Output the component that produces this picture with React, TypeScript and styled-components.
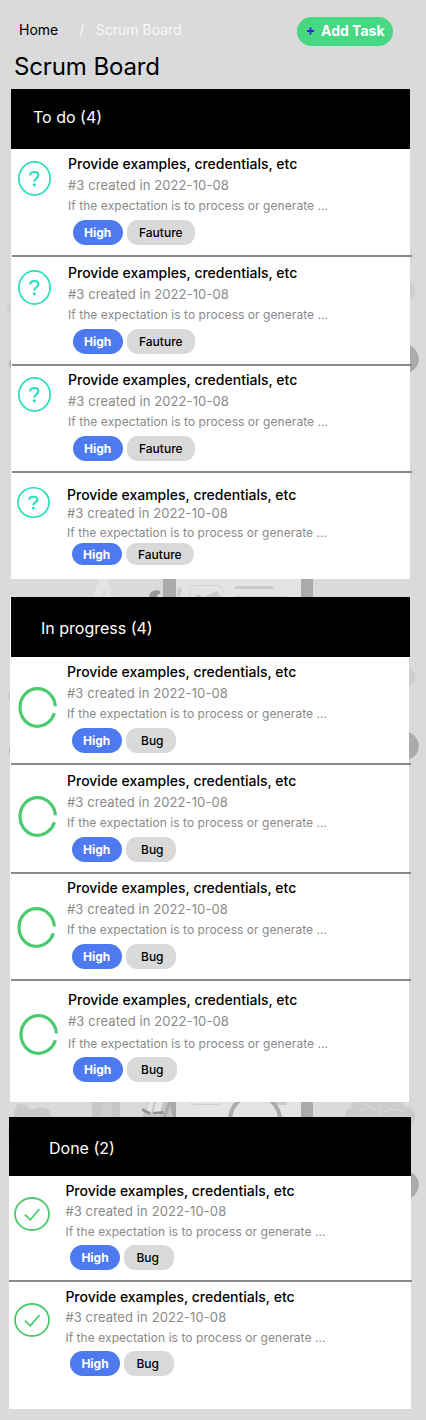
import React from "react";
import styled, { createGlobalStyle } from "styled-components";

const GlobalStyle = createGlobalStyle`
  * { box-sizing: border-box; }
  body { margin: 0; background: #dadada; font-family: Inter, "Liberation Sans", sans-serif; color: #000; }
`;

const Page = styled.main`
  position: relative;
  isolation: isolate;
  width: 426px;
  height: 1420px;
  background: #dadada;
  overflow: hidden;
`;

const Backdrop = styled.svg`
  position: absolute;
  inset: 0;
  z-index: -1;
`;

const TopBar = styled.header`
  display: flex;
  justify-content: space-between;
  align-items: flex-start;
  height: 50px;
  padding: 17px 33px 0 19px;
`;

const Breadcrumb = styled.nav`
  display: flex;
  padding-top: 4px;
  font-size: 14px;
  line-height: 18px;
`;

const Crumb = styled.span<{ $muted?: boolean; $gap?: number }>`
  margin-left: ${(p) => p.$gap ?? 0}px;
  color: ${(p) => (p.$muted ? "#f8f8f8" : "#000")};
  white-space: nowrap;
`;

const AddButton = styled.button`
  display: flex;
  align-items: center;
  gap: 7px;
  width: 96px;
  height: 29px;
  padding: 0 0 2px 10px;
  border: 0;
  border-radius: 15px;
  background: #47d881;
  color: #fff;
  font: 700 14px/18px Inter, sans-serif;
  white-space: nowrap;
`;

const Heading = styled.h1`
  height: 39px;
  margin: 0;
  padding-left: 14px;
  font-size: 24px;
  font-weight: 400;
  line-height: 33px;
  letter-spacing: -0.12px;
`;

const Panel = styled.section<{ $left: number; $width: number; $height: number; $after: number }>`
  display: flex;
  flex-direction: column;
  width: ${(p) => p.$width}px;
  height: ${(p) => p.$height}px;
  margin: 0 0 ${(p) => p.$after}px ${(p) => p.$left}px;
  background: #fff;
`;

const PanelHeader = styled.h2<{ $indent: number; $height: number; $shift: number; $top: number }>`
  flex: none;
  height: ${(p) => p.$height}px;
  width: 100%;
  margin: 0 0 0 ${(p) => p.$shift}px;
  padding: ${(p) => p.$top}px 0 0 ${(p) => p.$indent}px;
  background: #000;
  color: #fff;
  font-size: 16px;
  font-weight: 400;
  line-height: 22px;
`;

const Row = styled.article<{ $height: number; $width: number; $line: boolean; $shift: number }>`
  display: flex;
  align-items: flex-start;
  flex: none;
  width: ${(p) => p.$width}px;
  height: ${(p) => p.$height}px;
  margin-left: ${(p) => p.$shift}px;
  border-bottom: ${(p) => (p.$line ? "2px solid #8a8a8a" : "0")};
`;

const IconCell = styled.div<{ $top: number; $left: number; $width: number }>`
  flex: none;
  width: ${(p) => p.$width}px;
  padding: ${(p) => p.$top}px 0 0 ${(p) => p.$left}px;
  svg { display: block; }
`;

const Body = styled.div<{ $top: number }>`
  display: flex;
  flex-direction: column;
  padding-top: ${(p) => p.$top}px;
  white-space: nowrap;
`;

const Title = styled.h3`
  margin: 0;
  font-size: 14px;
  font-weight: 500;
  line-height: 18px;
`;

const Meta = styled.p<{ $gap: number }>`
  margin: ${(p) => p.$gap}px 0 0;
  color: #8a8a8a;
  font-size: 13px;
  line-height: 18px;
  letter-spacing: 0.1px;
`;

const Summary = styled(Meta)`
  font-size: 12px;
  letter-spacing: 0.06px;
`;

const Chips = styled.div<{ $gap: number }>`
  display: flex;
  gap: 4px;
  margin: ${(p) => p.$gap}px 0 0 5px;
`;

const Chip = styled.span<{ $high?: boolean; $width: number; $height: number; $pad: number }>`
  width: ${(p) => p.$width}px;
  height: ${(p) => p.$height}px;
  padding-left: ${(p) => p.$pad}px;
  border-radius: ${(p) => (p.$high ? 13 : 11)}px;
  background: ${(p) => (p.$high ? "#4e7af0" : "#d9d9d9")};
  color: ${(p) => (p.$high ? "#fff" : "#000")};
  font-size: 12px;
  font-weight: ${(p) => (p.$high ? 700 : 500)};
  line-height: ${(p) => (p.$height < 25 ? p.$height + 2 : p.$height)}px;
`;

type Kind = "todo" | "progress" | "done";

const QuestionIcon = ({ height }: { height: number }) => (
  <svg width="33" height={height} viewBox="0 0 33 35" preserveAspectRatio="none" fill="none" stroke="#2ee0c0">
    <ellipse cx="16.5" cy="17.5" rx="15.6" ry="16.6" strokeWidth="1.8" />
    <path d="M12.2 14.4C12.2 12.2 14 11 16.3 11S20.4 12.3 20.4 14.3C20.4 17.2 16.3 17 16.3 20.7" strokeWidth="2.2" />
    <circle cx="16.3" cy="23.8" r="1.6" fill="#2ee0c0" stroke="none" />
  </svg>
);

const ProgressIcon = () => (
  <svg width="40" height="41" viewBox="0 0 40 41" fill="none" stroke="#4bca6e" strokeWidth="3.2">
    <path d="M37.4 19.4C36.8 9.4 29 1.7 19.5 1.7C9.8 1.7 2 10 2 20.5S9.8 39.3 19.5 39.3C27.2 39.3 34 33.8 36.4 26.2" />
  </svg>
);

const DoneIcon = () => (
  <svg width="36" height="34" viewBox="0 0 36 34" fill="none" stroke="#4bca6e">
    <ellipse cx="18" cy="17" rx="17" ry="16" strokeWidth="1.8" />
    <path d="M10.8 17.7L16.4 22.8L25.4 12" strokeWidth="1.8" />
  </svg>
);

interface Task {
  height: number;
  top: number;
  iconTop: number;
  iconLeft: number;
  iconHeight?: number;
  textLeft: number;
  gaps: [number, number, number];
  chipHeight?: number;
  tagPad?: number;
}

interface Column {
  kind: Kind;
  title: string;
  tag: string;
  tagWidth: number;
  tagPad: number;
  left: number;
  width: number;
  height: number;
  after: number;
  indent: number;
  headerTop: number;
  headerHeight: number;
  headerShift: number;
  lineShift: number;
  lineWidth: number;
  tasks: Task[];
}

const columns: Column[] = [
  {
    kind: "todo", title: "To do (4)", tag: "Fauture", tagWidth: 68, tagPad: 12,
    left: 11, width: 399, height: 490, after: 18, indent: 22, headerTop: 17, headerHeight: 60, headerShift: 0, lineShift: 1, lineWidth: 400,
    tasks: [
      { height: 108, top: 6, iconTop: 12, iconLeft: 6, textLeft: 56, gaps: [3, 3, 5] },
      { height: 109, top: 7, iconTop: 13, iconLeft: 6, textLeft: 56, gaps: [3, 3, 5] },
      { height: 107, top: 5, iconTop: 11, iconLeft: 6, textLeft: 56, gaps: [3, 3, 5] },
      { height: 106, top: 13, iconTop: 13.5, iconLeft: 5, iconHeight: 31, textLeft: 55, gaps: [0, 2, 1], chipHeight: 22 },
    ],
  },
  {
    kind: "progress", title: "In progress (4)", tag: "Bug", tagWidth: 50, tagPad: 15,
    left: 10, width: 399, height: 505, after: 15, indent: 30, headerTop: 20, headerHeight: 60, headerShift: 1, lineShift: 1, lineWidth: 400,
    tasks: [
      { height: 108, top: 6, iconTop: 30, iconLeft: 7, textLeft: 56, gaps: [3, 3, 5] },
      { height: 109, top: 7, iconTop: 31, iconLeft: 7, textLeft: 56, gaps: [3, 3, 5] },
      { height: 107, top: 5, iconTop: 33, iconLeft: 6, textLeft: 56, gaps: [3, 3, 5] },
      { height: 121, top: 10, iconTop: 33, iconLeft: 8, textLeft: 57, gaps: [3, 5, 4], tagPad: 14 },
    ],
  },
  {
    kind: "done", title: "Done (2)", tag: "Bug", tagWidth: 50, tagPad: 12,
    left: 9, width: 402, height: 292, after: 0, indent: 40, headerTop: 20, headerHeight: 59, headerShift: 0, lineShift: 0, lineWidth: 403,
    tasks: [
      { height: 106, top: 6, iconTop: 21, iconLeft: 5, textLeft: 56.4, gaps: [2, 3, 4.4] },
      { height: 127, top: 6, iconTop: 21, iconLeft: 5, textLeft: 56.4, gaps: [2, 3, 4.4] },
    ],
  },
];

const StatusIcon = ({ kind, height }: { kind: Kind; height: number }) =>
  kind === "todo" ? <QuestionIcon height={height} /> : kind === "progress" ? <ProgressIcon /> : <DoneIcon />;

const TaskRow = ({ task, column, last }: { task: Task; column: Column; last: boolean }) => (
  <Row $height={task.height} $width={column.lineWidth} $line={!last} $shift={column.lineShift}>
    <IconCell $top={task.iconTop} $left={task.iconLeft} $width={task.textLeft}>
      <StatusIcon kind={column.kind} height={task.iconHeight ?? 35} />
    </IconCell>
    <Body $top={task.top}>
      <Title>Provide examples, credentials, etc</Title>
      <Meta $gap={task.gaps[0]}>#3 created in 2022-10-08</Meta>
      <Summary $gap={task.gaps[1]}>If the expectation is to process or generate ...</Summary>
      <Chips $gap={task.gaps[2]}>
        <Chip $high $width={50} $height={task.chipHeight ?? 25} $pad={11}>High</Chip>
        <Chip $width={column.tagWidth} $height={task.chipHeight ?? 25} $pad={task.tagPad ?? column.tagPad}>
          {column.tag}
        </Chip>
      </Chips>
    </Body>
  </Row>
);

const SideBlobs = ({ y }: { y: number }) => (
  <g transform={`translate(0 ${y})`}>
    <circle cx="12" cy="309" r="5" fill="#cecece" />
    <circle cx="15" cy="364" r="6" fill="#ababab" />
    <circle cx="406" cy="290" r="9.5" fill="#cecece" />
    <circle cx="404.5" cy="359" r="14.3" fill="#ababab" />
  </g>
);

const Illustration = () => (
  <Backdrop width="426" height="1420" viewBox="0 0 426 1420" fill="none">
    <SideBlobs y={0} />
    <SideBlobs y={387} />
    <SideBlobs y={826} />
    <path d="M100 579H108L111 592L104 590L102 597H92Z" fill="#e4e4e4" />
    <path d="M106 590L113 597H104Z" fill="#e4e4e4" />
    <path d="M149 597C149 592 155 589 160 591V594C157 594 157 596 157 597Z" fill="#999" />
    <path d="M163 579H313V597H163Z" fill="#ababab" />
    <path d="M176 579H301V597H176Z" fill="#e4e4e4" />
    <path d="M177 597V590L181 585L180 589H183L179 597Z" fill="#cbcbcb" />
    <rect x="189.5" y="585.5" width="33" height="30" rx="5" stroke="#d3d3d3" />
    <path d="M194 597L198 594L203 597L217 591L221 597Z" fill="#cbcbcb" />
    <path d="M236 587.5H272" stroke="#cacaca" strokeWidth="3" strokeLinecap="round" />
    <path d="M235 596.5H287" stroke="#cacaca" strokeWidth="1" />

    <path d="M14 1117C15 1110 15 1104 20 1104C29 1104 25 1110 34 1109C42 1107 51 1106 51 1117Z" fill="#c9c9c9" />
    <path d="M92 1102H120V1117H92Z" fill="#c7c7c7" />
    <path d="M101 1102H112V1117H101Z" fill="#cdcdcd" />
    <path d="M120 1102H163V1117H120Z" fill="#dadada" />
    <path d="M148 1102L142 1117H176V1102Z" fill="#c5c5c5" />
    <path d="M149 1102H164L160 1115L146 1111Z" fill="#e4e4e4" />
    <path d="M155 1102L152 1113M164 1102L160 1117" stroke="#c5c5c5" strokeWidth="2" />
    <path d="M142 1108L150 1112V1115L142 1111ZM153 1112L163 1111L164 1114H153Z" fill="#919191" />
    <path d="M168 1102H176V1117H173L170 1106L166 1117H163Z" fill="#ababab" />
    <path d="M176 1102H301V1117H176Z" fill="#e4e4e4" />
    <path d="M190 1102Q191 1104.5 195 1104.5H217Q221 1104.5 222 1102" stroke="#cfcfcf" />
    <path d="M243 1102H287V1105H243Z" fill="#cacaca" />
    <circle cx="255" cy="1120" r="25" fill="#e4e4e4" stroke="#ababab" strokeWidth="4" />
    <path d="M301 1102H313V1117H301Z" fill="#ababab" />
    <path d="M345 1117C345 1110 349 1108 352 1109C350 1105 352 1102 357 1102H402C405 1105 402 1108 407 1110C412 1110 415 1113 415 1119C414 1122 413 1123 411 1124V1117Z" fill="#cbcbcb" />
    <path d="M380 1117V1102M380 1111L363 1103M380 1115L397 1104M389 1109L405 1111M371 1107L359 1110" stroke="#dadada" />
  </Backdrop>
);

export default function App() {
  return (
    <>
      <GlobalStyle />
      <Page>
        <Illustration />
        <TopBar>
          <Breadcrumb>
            <Crumb>Home</Crumb>
            <Crumb $muted $gap={21}>/</Crumb>
            <Crumb $muted $gap={11.5}>Scrum Board</Crumb>
          </Breadcrumb>
          <AddButton>
            <svg width="7" height="8" viewBox="0 0 7 8" stroke="#3a1cf0" strokeWidth="1.9">
              <path d="M3.5 0.5V7.5M0 4H7" />
            </svg>
            Add Task
          </AddButton>
        </TopBar>
        <Heading>Scrum Board</Heading>
        {columns.map((column) => (
          <Panel key={column.kind} $left={column.left} $width={column.width} $height={column.height} $after={column.after}>
            <PanelHeader
              $indent={column.indent}
              $height={column.headerHeight}
              $shift={column.headerShift}
              $top={column.headerTop}
            >
              {column.title}
            </PanelHeader>
            {column.tasks.map((task, i) => (
              <TaskRow key={i} task={task} column={column} last={i === column.tasks.length - 1} />
            ))}
          </Panel>
        ))}
      </Page>
    </>
  );
}
